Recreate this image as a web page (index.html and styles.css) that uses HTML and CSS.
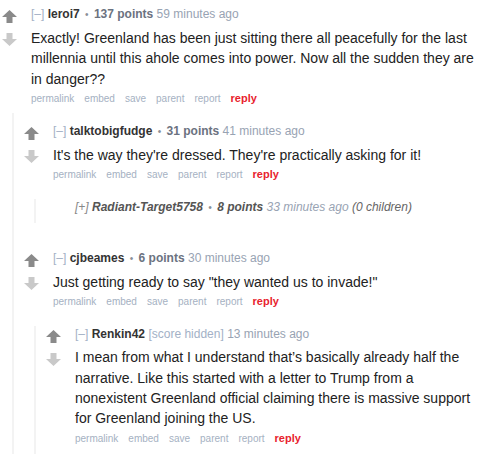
FILE: index.html
```html
<!DOCTYPE html>
<html lang="en">
<head>
  <meta charset="UTF-8" />
  <title>Comments</title>
  <link rel="stylesheet" href="styles.css">
</head>
<body>
  <div class="thread">

    <div class="comment">
      <div class="midcol">
        <svg class="arrow up" viewBox="0 0 15 13"><path d="M7.5 0 L15 7 L10.5 7 L10.5 13 L4.5 13 L4.5 7 L0 7 Z"/></svg>
        <svg class="arrow down" viewBox="0 0 15 13"><path d="M4.5 0 L10.5 0 L10.5 6 L15 6 L7.5 13 L0 6 L4.5 6 Z"/></svg>
      </div>
      <div class="entry">
        <p class="tagline">
          <span class="expand">[–]</span>
          <span class="author">leroi7</span>
          <span class="dot">•</span>
          <span class="score">137 points</span>
          <span class="time">59 minutes ago</span>
        </p>
        <div class="md">Exactly! Greenland has been just sitting there all peacefully for the last millennia until this ahole comes into power. Now all the sudden they are in danger??</div>
        <ul class="buttons">
          <li>permalink</li><li>embed</li><li>save</li><li>parent</li><li>report</li><li class="reply">reply</li>
        </ul>
      </div>

      <div class="child first">

        <div class="comment">
          <div class="midcol">
            <svg class="arrow up" viewBox="0 0 15 13"><path d="M7.5 0 L15 7 L10.5 7 L10.5 13 L4.5 13 L4.5 7 L0 7 Z"/></svg>
            <svg class="arrow down" viewBox="0 0 15 13"><path d="M4.5 0 L10.5 0 L10.5 6 L15 6 L7.5 13 L0 6 L4.5 6 Z"/></svg>
          </div>
          <div class="entry">
            <p class="tagline">
              <span class="expand">[–]</span>
              <span class="author">talktobigfudge</span>
              <span class="dot">•</span>
              <span class="score">31 points</span>
              <span class="time">41 minutes ago</span>
            </p>
            <div class="md">It's the way they're dressed. They're practically asking for it!</div>
            <ul class="buttons">
              <li>permalink</li><li>embed</li><li>save</li><li>parent</li><li>report</li><li class="reply">reply</li>
            </ul>
          </div>

          <div class="child">
            <div class="comment collapsed">
              <div class="midcol"></div>
              <p class="tagline">
                <span class="expand">[+]</span>
                <span class="author">Radiant-Target5758</span>
                <span class="dot">•</span>
                <span class="score">8 points</span>
                <span class="time">33 minutes ago</span>
                <span class="count">(0 children)</span>
              </p>
            </div>
          </div>
        </div>

        <div class="comment">
          <div class="midcol">
            <svg class="arrow up" viewBox="0 0 15 13"><path d="M7.5 0 L15 7 L10.5 7 L10.5 13 L4.5 13 L4.5 7 L0 7 Z"/></svg>
            <svg class="arrow down" viewBox="0 0 15 13"><path d="M4.5 0 L10.5 0 L10.5 6 L15 6 L7.5 13 L0 6 L4.5 6 Z"/></svg>
          </div>
          <div class="entry">
            <p class="tagline">
              <span class="expand">[–]</span>
              <span class="author">cjbeames</span>
              <span class="dot">•</span>
              <span class="score">6 points</span>
              <span class="time">30 minutes ago</span>
            </p>
            <div class="md">Just getting ready to say "they wanted us to invade!"</div>
            <ul class="buttons">
              <li>permalink</li><li>embed</li><li>save</li><li>parent</li><li>report</li><li class="reply">reply</li>
            </ul>
          </div>

          <div class="child">
            <div class="comment">
              <div class="midcol">
                <svg class="arrow up" viewBox="0 0 15 13"><path d="M7.5 0 L15 7 L10.5 7 L10.5 13 L4.5 13 L4.5 7 L0 7 Z"/></svg>
                <svg class="arrow down" viewBox="0 0 15 13"><path d="M4.5 0 L10.5 0 L10.5 6 L15 6 L7.5 13 L0 6 L4.5 6 Z"/></svg>
              </div>
              <div class="entry">
                <p class="tagline">
                  <span class="expand">[–]</span>
                  <span class="author">Renkin42</span>
                  <span class="hidden-score">[score hidden]</span>
                  <span class="time">13 minutes ago</span>
                </p>
                <div class="md">I mean from what I understand that’s basically already half the narrative. Like this started with a letter to Trump from a nonexistent Greenland official claiming there is massive support for Greenland joining the US.</div>
                <ul class="buttons">
                  <li>permalink</li><li>embed</li><li>save</li><li>parent</li><li>report</li><li class="reply">reply</li>
                </ul>
              </div>
            </div>
          </div>
        </div>

      </div>
    </div>

  </div>
</body>
</html>
```

FILE: styles.css
```css
* { box-sizing: border-box; margin: 0; padding: 0; }
body {
  background: #fff;
  color: #222;
  font-family: "Liberation Sans", Arial, sans-serif;
  width: 502px;
  height: 458px;
  overflow: hidden;
}
.thread {
  padding: 6px 16px 0 2px;
}
.comment {
  display: grid;
  grid-template-columns: 29px 1fr;
}
.comment .child {
  grid-column: 1 / -1;
  margin-left: 10px;
  margin-top: 16px;
  padding: 0 0 7px 10px;
  border-left: 2px solid #f3f3f3;
}
.comment .child.first {
  margin-top: 6px;
  padding-top: 10px;
  padding-bottom: 0;
}
.child.first > .comment + .comment {
  margin-top: 27px;
}
.midcol {
  display: flex;
  flex-direction: column;
  gap: 10px;
  padding-top: 4px;
}
.arrow {
  width: 15px;
  height: 13px;
}
.arrow.up { fill: #8a8a8a; }
.arrow.down { fill: #c9c9c9; }

.tagline {
  font-size: 12px;
  line-height: 16px;
  color: #98a3b3;
}
.expand { color: #a3b1c6; }
.author { font-weight: bold; color: #333; }
.dot { color: #8a8f98; font-size: 10px; margin: 0 2px; }
.score { font-weight: bold; color: #6b7280; }
.hidden-score { color: #a3b1c6; }
.md {
  margin-top: 5px;
  font-size: 14px;
  line-height: 20.3px;
  color: #222;
}
.buttons {
  list-style: none;
  display: flex;
  gap: 10px;
  margin-top: 2px;
  height: 16px;
  font-size: 10px;
  line-height: 16px;
  color: #a5b1c2;
}
.buttons .reply {
  color: #e8232e;
  font-weight: bold;
  font-size: 11px;
  line-height: 15px;
}
.collapsed .tagline {
  font-style: italic;
  color: #98a3b3;
}
.collapsed .expand { color: #888; }
.collapsed .author { color: #555; }
.collapsed .score { color: #555; }
.collapsed .count { color: #666; }
```
